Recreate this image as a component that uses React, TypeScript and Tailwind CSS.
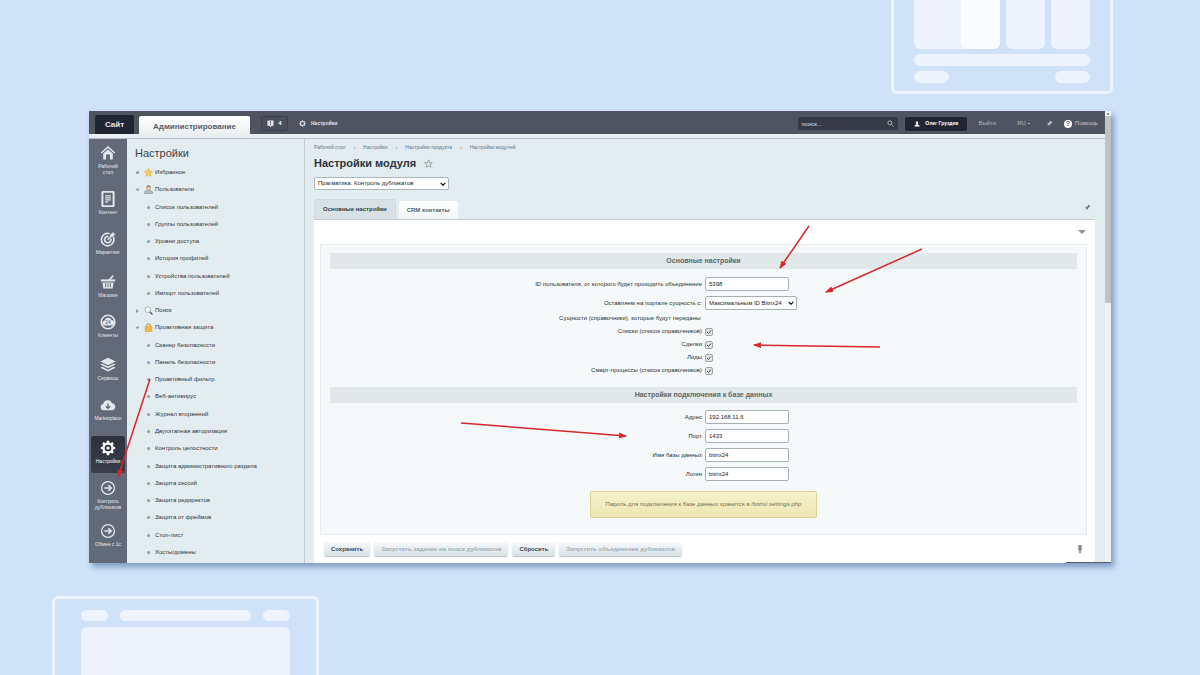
import type { ReactNode } from 'react'

const railItems = [
  { icon: 'home', lines: ['Рабочий', 'стол'], height: 'h-[46px]' },
  { icon: 'doc', lines: ['Контент'], height: 'h-[40px]' },
  { icon: 'target', lines: ['Маркетинг'], height: 'h-[43px]' },
  { icon: 'basket', lines: ['Магазин'], height: 'h-[40px]' },
  { icon: 'clients', lines: ['Клиенты'], height: 'h-[43px]' },
  { icon: 'layers', lines: ['Сервисы'], height: 'h-[40px]' },
  { icon: 'cloud', lines: ['Marketplace'], height: 'h-[43px]' },
  { icon: 'gear', lines: ['Настройки'], height: 'h-[40px]', active: true },
  { icon: 'arrow', lines: ['Контроль', 'дубликатов'], height: 'h-[43px]' },
  { icon: 'arrow', lines: ['Обмен с 1с'], height: 'h-[40px]' },
]

const menu = [
  { label: 'Избранное', icon: 'star', mark: 'dot' },
  { label: 'Пользователи', icon: 'user', mark: 'open' },
  { label: 'Список пользователей' },
  { label: 'Группы пользователей' },
  { label: 'Уровни доступа' },
  { label: 'История профилей' },
  { label: 'Устройства пользователей' },
  { label: 'Импорт пользователей' },
  { label: 'Поиск', icon: 'search', mark: 'closed' },
  { label: 'Проактивная защита', icon: 'lock', mark: 'open' },
  { label: 'Сканер безопасности' },
  { label: 'Панель безопасности' },
  { label: 'Проактивный фильтр' },
  { label: 'Веб-антивирус' },
  { label: 'Журнал вторжений' },
  { label: 'Двухэтапная авторизация' },
  { label: 'Контроль целостности' },
  { label: 'Защита административного раздела' },
  { label: 'Защита сессий' },
  { label: 'Защита редиректов' },
  { label: 'Защита от фреймов' },
  { label: 'Стоп-лист' },
  { label: 'Хосты/домены' },
]

const crumbs = ['Рабочий стол', 'Настройки', 'Настройки продукта', 'Настройки модулей']

const entities = [
  { id: 'lists', label: 'Списки (список справочников)' },
  { id: 'deals', label: 'Сделки' },
  { id: 'leads', label: 'Лиды' },
  { id: 'smart', label: 'Смарт-процессы (список справочников)' },
]

const dbFields = [
  { id: 'host', label: 'Адрес', value: '192.168.11.6' },
  { id: 'port', label: 'Порт', value: '1433' },
  { id: 'dbname', label: 'Имя базы данных', value: 'bitrix24' },
  { id: 'login', label: 'Логин', value: 'bitrix24' },
]

const gearPath =
  'M8.6 1h2.8l.4 2.3 1.6.7 1.9-1.4 2 2-1.3 1.9.6 1.6 2.4.5v2.8l-2.4.4-.6 1.6 1.3 2-2 1.9-1.9-1.3-1.6.6-.4 2.4H8.6l-.4-2.4-1.6-.6-1.9 1.3-2-1.9 1.3-2-.6-1.6L1 11.4V8.6l2.4-.5.6-1.6-1.3-1.9 2-2 1.9 1.4 1.6-.7z'

function RailIcon({ name }: { name: string }) {
  return (
    <svg viewBox="0 0 20 20" className="h-4 w-4 shrink-0" fill="none" stroke="#e3e7ec" strokeWidth="2">
      {name === 'home' && (
        <>
          <path d="M1.5 10 10 2.5 18.5 10" />
          <path d="M4 10.5V18h3.5v-6h5v6H16v-7.5L10 5.5z" fill="#e3e7ec" stroke="none" />
        </>
      )}
      {name === 'doc' && (
        <>
          <rect x="3" y="1" width="14" height="18" rx="1" strokeWidth="2.5" />
          <path d="M6.5 6h7M6.5 8.500h7M6.5 11h7M6.5 13.500h4" strokeWidth="1.5" />
        </>
      )}
      {name === 'target' && (
        <>
          <path d="M16.7 7.5A7.8 7.8 0 1 1 12 3.3" />
          <path d="M13.500 9.500a4 4 0 1 1-3-2.700" />
          <path d="m9.500 11 5-5" />
          <path d="m13 4.500 4-3.500v2.500h2.500L16 7.500h-3z" fill="#e3e7ec" stroke="none" />
        </>
      )}
      {name === 'basket' && (
        <>
          <path d="M1 8h18" strokeWidth="2.5" />
          <path d="M3 10.500h14l-1.200 7.500H4.200z" fill="#e3e7ec" stroke="none" />
          <path d="M7 11.500v5M10 11.500v5M13 11.500v5" stroke="#5d6473" strokeWidth="1.2" />
          <path d="m11.500 7.500 5-5.500" />
        </>
      )}
      {name === 'clients' && (
        <>
          <circle cx="10" cy="10" r="8.500" />
          <path d="M6 14.500a3.300 3.300 0 0 1-.5-6.500 4.800 4.800 0 0 1 9-.500 3.500 3.500 0 0 1-.500 7z" fill="#e3e7ec" stroke="none" />
          <text x="10" y="13" textAnchor="middle" fontSize="6" fill="#4c5362" stroke="none">24</text>
        </>
      )}
      {name === 'layers' && (
        <g fill="#e3e7ec" stroke="none">
          <path d="m10 1 9.500 4.700L10 10.400.5 5.700z" />
          <path d="m.5 9.500 2.500-1.200 7 3.500 7-3.500 2.500 1.200L10 14.200z" />
          <path d="m.5 13.500 2.500-1.200 7 3.500 7-3.500 2.500 1.200L10 18.200z" />
        </g>
      )}
      {name === 'cloud' && (
        <>
          <path d="M4.500 16.500a4 4 0 0 1-.5-7.900 5.800 5.800 0 0 1 11-.8 4.400 4.400 0 0 1 .5 8.700z" fill="#e3e7ec" stroke="none" />
          <path d="M10 8v6M7.300 11.500 10 14.200l2.700-2.700" stroke="#5d6473" strokeWidth="1.6" />
        </>
      )}
      {name === 'gear' && (
        <>
          <path d={gearPath} fill="#fff" stroke="none" />
          <circle cx="10" cy="10" r="4.200" fill="#2e333f" stroke="none" />
          <circle cx="10" cy="10" r="2" fill="#fff" stroke="none" />
        </>
      )}
      {name === 'arrow' && (
        <>
          <circle cx="10" cy="10" r="8" strokeWidth="1.6" />
          <path d="M5.500 10h8M10.500 6.500 14 10l-3.500 3.500" />
        </>
      )}
    </svg>
  )
}

function MenuIcon({ name }: { name: string }) {
  return (
    <svg viewBox="0 0 16 16" className="h-[9px] w-[9px] shrink-0">
      {name === 'star' && (
        <path d="m8 1 2.200 4.600 5 .6-3.700 3.500 1 5L8 12.300l-4.500 2.400 1-5L.8 6.200l5-.6z" fill="#f6cf55" stroke="#d9a93a" />
      )}
      {name === 'user' && (
        <>
          <path d="M1 15v-3l4-2h6l4 2v3z" fill="#b9c3cb" stroke="#6f7982" />
          <ellipse cx="8" cy="5" rx="3.500" ry="4.300" fill="#ecd0b0" stroke="#a78d75" />
          <path d="M4.500 4.500a3.500 3.800 0 0 1 7 0L8 3z" fill="#917760" />
        </>
      )}
      {name === 'search' && (
        <>
          <circle cx="6.500" cy="6.500" r="5" fill="#f7fbff" stroke="#9aa6b1" strokeWidth="1.5" />
          <path d="m10.500 10.500 4.500 4.500" stroke="#5d5c68" strokeWidth="2.5" />
        </>
      )}
      {name === 'lock' && (
        <>
          <path d="M4.500 8V5a3.500 3.500 0 0 1 7 0v3" fill="none" stroke="#c2a55c" strokeWidth="2" />
          <rect x="2" y="6" width="12" height="9.500" rx="1.500" fill="#f1bd4a" stroke="#cf9530" />
        </>
      )}
    </svg>
  )
}

function Mark({ kind }: { kind?: string }) {
  if (kind === 'open') return <svg viewBox="0 0 6 6" className="h-1 w-[5px] shrink-0"><path d="M0 1h6L3 5z" fill="#84929d" /></svg>
  if (kind === 'closed') return <svg viewBox="0 0 6 6" className="h-1 w-[5px] shrink-0"><path d="M1 0v6l4-3z" fill="#84929d" /></svg>
  return <span className="mx-px h-[3px] w-[3px] shrink-0 rounded-full bg-[#8e9dab]" />
}

function Pin({ className }: { className: string }) {
  return (
    <svg viewBox="0 0 16 16" className={className} fill="currentColor">
      <path d="m10 1 5 5-1.500 1-1-.3-3 3L9 12l-1 1-2.300-2.300L1 15l4-5L3 8l1-1 2.500-.5 3-3L9 2z" />
    </svg>
  )
}

function Chevron() {
  return (
    <svg viewBox="0 0 10 6" className="pointer-events-none absolute right-[3px] h-1 w-[6px]" fill="none" stroke="#111" strokeWidth="2">
      <path d="m1 1 4 4 4-4" />
    </svg>
  )
}

function Header() {
  return (
    <header className="flex h-[23px] items-center bg-[#4f5461] pl-[6px] pr-[7px] pt-[2px] text-white">
      <nav className="flex h-full items-end gap-[5px]">
        <a href="#site" className="flex h-[19px] w-[39px] items-center justify-center rounded-t-xs bg-[#202534] text-[8px] font-bold text-[#e4e7eb]">Сайт</a>
        <a href="#admin" className="relative z-10 -mb-[4px] flex h-[22px] w-[111px] items-center justify-center rounded-t-xs bg-linear-to-b from-white to-[#e6edee] text-[8px] font-bold text-[#586066]">
          Администрирование
        </a>
      </nav>
      <button className="ml-[11px] flex h-[15px] w-[27px] items-center justify-center gap-1 rounded-xs border border-[#3b404c] bg-[#4a4f5c] text-[6px] font-bold">
        <svg viewBox="0 0 16 16" className="h-[7px] w-[7px]">
          <path d="M1 1h14v12h-4l-3 3-3-3H1z" fill="#e4e7ea" />
          <path d="M8 3v5M8 9.500v2" stroke="#4a4f5c" strokeWidth="2" />
        </svg>
        4
      </button>
      <a href="#settings" className="ml-[11px] flex items-center gap-[5px] text-[5px] font-bold text-[#e4e7eb]">
        <svg viewBox="0 0 20 20" className="h-[7px] w-[7px]">
          <path d={gearPath} fill="#e4e7eb" />
          <circle cx="10" cy="10" r="4" fill="#4f5461" />
        </svg>
        Настройки
      </a>
      <div className="relative ml-auto flex h-[13px] w-[100px] items-center">
        <input aria-label="поиск" placeholder="поиск..." className="h-full w-full rounded-xs bg-[#353a46] px-[3px] text-[6px] text-white placeholder:text-[#d9dce1]" />
        <svg viewBox="0 0 12 12" className="absolute right-1 h-[7px] w-[7px]" fill="none" stroke="#b9bec7" strokeWidth="1.5">
          <circle cx="5" cy="5" r="3.500" />
          <path d="m8 8 3 3" />
        </svg>
      </div>
      <a href="#profile" className="ml-[7px] flex h-[14px] w-[62px] items-center justify-center gap-[5px] rounded-xs bg-[#202534] text-[5px] font-bold">
        <svg viewBox="0 0 12 12" className="h-[6px] w-[6px]" fill="#fff">
          <path d="M3.500 3.500a2.500 3 0 1 1 5 0c0 1.500-.7 2-1 3.500L11 9v2H1V9l3.500-2c-.3-1.500-1-2-1-3.500z" />
        </svg>
        Олег Груздев
      </a>
      <a href="#logout" className="ml-[11px] text-[6px] text-[#b3b8c1]">Выйти</a>
      <button className="ml-[21px] flex items-center gap-[2px] text-[6px] text-[#b3b8c1]">
        RU
        <span className="h-px w-[2px] bg-[#b3b8c1]" />
      </button>
      <button aria-label="Закрепить" className="ml-4 text-[#b8c0cb]"><Pin className="h-[7px] w-[7px]" /></button>
      <a href="#help" className="ml-[11px] flex items-center gap-[3px] text-[6px] text-[#c3c8d0]">
        <span className="flex h-2 w-2 items-center justify-center rounded-full bg-white text-[7px] font-bold leading-none text-[#4f5461]">?</span>
        Помощь
      </a>
    </header>
  )
}

function Rail() {
  return (
    <nav className="w-[38px] shrink-0 bg-[#626978] px-[2px] pt-[2px] text-center">
      {railItems.map((item) => (
        <div key={item.lines[0]} className={item.height}>
          <a
            href="#section"
            className={
              item.active
                ? 'flex h-[37px] flex-col items-center rounded-xs bg-linear-to-b from-[#2c313d] to-[#383e4b] pt-1 text-[5px] leading-[6px] text-white'
                : 'flex h-[37px] flex-col items-center pt-1 text-[5px] leading-[6px] text-[#e5e8ed]'
            }
          >
            <RailIcon name={item.icon} />
            <span className="mt-[2px] flex flex-col items-center whitespace-nowrap">
              {item.lines.map((line) => <span key={line}>{line}</span>)}
            </span>
          </a>
        </div>
      ))}
    </nav>
  )
}

function Sidebar() {
  return (
    <aside className="flex w-[178px] shrink-0 flex-col border-r border-[#c3ced4] bg-[#e3ecee] pb-[2px] pt-[7px]">
      <h2 className="pl-2 text-[11px] leading-[14px] text-[#3c454b]">Настройки</h2>
      <ul className="mt-1 flex flex-1 flex-col justify-between">
        {menu.map((item) => (
          <li key={item.label} className={item.icon ? 'flex h-[17px] items-center pl-2' : 'flex h-[17px] items-center pl-[19px]'}>
            <a href="#menu" className="flex items-center text-[6px] text-[#30363a]">
              <Mark kind={item.mark} />
              {item.icon && <span className="ml-1 mr-[2px]"><MenuIcon name={item.icon} /></span>}
              <span className={item.icon ? '' : 'ml-1'}>{item.label}</span>
            </a>
          </li>
        ))}
      </ul>
    </aside>
  )
}

function Section({ title, children }: { title: string; children: ReactNode }) {
  return (
    <section>
      <h3 className="bg-[#e0e8ea] text-center text-[7px] font-bold leading-4 text-[#5a666d]">{title}</h3>
      {children}
    </section>
  )
}

function TextRow({ id, label, value }: { id: string; label: string; value: string }) {
  return (
    <div className="grid grid-cols-2 items-center gap-x-[3px]">
      <label htmlFor={id} className="text-right">{label}</label>
      <input id={id} defaultValue={value} className="h-[14px] w-[84px] rounded-xs border border-[#a5afb6] bg-white px-[3px] text-[6px] text-[#222]" />
    </div>
  )
}

function SettingsForm() {
  return (
    <form className="border border-[#e6ecef] bg-[#f5f9f9] px-[9px] pb-4 pt-2 text-[6px] leading-[13px] text-[#2b3135]">
      <Section title="Основные настройки">
        <div className="flex flex-col gap-[5px] pt-2">
          <TextRow id="user" label="ID пользователя, от которого будет проходить объединение" value="5398" />
          <div className="grid grid-cols-2 items-center gap-x-[3px]">
            <label htmlFor="keep" className="text-right">Оставляем на портале сущность с:</label>
            <div className="relative flex w-[92px] items-center">
              <select id="keep" className="h-[14px] w-full appearance-none rounded-xs border border-[#a5afb6] bg-white px-[3px] text-[6px] leading-3 text-[#222]">
                <option>Максимальным ID Bitrix24</option>
              </select>
              <Chevron />
            </div>
          </div>
        </div>
        <fieldset aria-label="Сущности" className="pb-[10px] pt-[2px]">
          <div className="grid grid-cols-2 gap-x-[3px]">
            <span className="text-right">Сущности (справочники), которые будут переданы:</span>
          </div>
          {entities.map((item) => (
            <div key={item.id} className="grid grid-cols-2 items-center gap-x-[3px]">
              <label htmlFor={item.id} className="text-right">{item.label}</label>
              <span className="grid h-2 w-2">
                <input id={item.id} type="checkbox" defaultChecked className="col-start-1 row-start-1 h-2 w-2 appearance-none rounded-xs border border-[#9ba5ab] bg-[#e3e9eb]" />
                <svg viewBox="0 0 8 8" className="pointer-events-none col-start-1 row-start-1 h-2 w-2" fill="none" stroke="#434a50" strokeWidth="1">
                  <path d="m2 4 1.500 1.500L6 2.500" />
                </svg>
              </span>
            </div>
          ))}
        </fieldset>
      </Section>
      <Section title="Настройки подключения к базе данных">
        <div className="flex flex-col gap-[5px] pt-[7px]">
          {dbFields.map((field) => (
            <TextRow key={field.id} {...field} />
          ))}
        </div>
        <p className="mx-auto mt-[10px] w-fit rounded-xs border border-[#ddd296] bg-linear-to-b from-[#f6f2cb] to-[#eee6b2] px-[15px] py-[6px] text-[#766f52]">
          Пароль для подключения к базе данных хранится в /bitrix/.settings.php
        </p>
      </Section>
    </form>
  )
}

function ActionButton({ children, disabled = false }: { children: ReactNode; disabled?: boolean }) {
  return (
    <button
      disabled={disabled}
      className="h-[14px] rounded-xs bg-linear-to-b from-[#f8fafb] to-[#d8e1e6] px-[7px] text-[6px] font-bold text-[#3c474e] shadow-[0_1px_1px_#b9c4ca] disabled:text-[#a3adb3]"
    >
      {children}
    </button>
  )
}

function Content() {
  return (
    <main className="min-w-0 flex-1 bg-[#e3ecee] pl-[9px] pr-[10px] pt-1">
      <nav className="flex gap-2 text-[5px] leading-[9px] text-[#62758e]">
        {crumbs.map((crumb, i) => (
          <span key={crumb} className="flex gap-2">
            {i > 0 && <span>›</span>}
            <a href="#crumb">{crumb}</a>
          </span>
        ))}
      </nav>
      <h1 className="mt-[4px] flex items-center gap-2 text-[11px] font-bold leading-[14px] text-[#2d3439]">
        Настройки модуля
        <svg viewBox="0 0 16 16" className="h-[9px] w-[9px]" fill="none" stroke="#8b969e" strokeWidth="1.5">
          <path d="m8 1.500 2 4.500 4.800.5-3.600 3.200 1 4.800L8 12l-4.200 2.500 1-4.800L1.200 6.500 6 6z" />
        </svg>
      </h1>
      <div className="relative mt-[7px] flex w-[135px] items-center">
        <select aria-label="Модуль" className="h-[13px] w-full appearance-none rounded-xs border border-[#abb5bb] bg-white px-[3px] text-[6px] leading-[11px] text-[#222]">
          <option>Прагматика. Контроль дубликатов</option>
        </select>
        <Chevron />
      </div>
      <div className="mt-[9px] flex items-end gap-[3px] border-b border-[#c2cdd3] text-[6px] font-bold">
        <button className="h-[20px] rounded-t-xs border border-b-0 border-[#d0dadf] bg-[#d8e2e5] px-2 text-[#343b40]">Основные настройки</button>
        <button className="h-[18px] rounded-t-xs bg-linear-to-b from-white to-[#f1f5f6] px-2 text-[#566068]">CRM контакты</button>
        <button aria-label="Закрепить вкладки" className="mb-2 ml-auto mr-1 text-[#77828a]"><Pin className="h-[7px] w-[7px]" /></button>
      </div>
      <div className="bg-white pb-[7px] pl-[6px] pr-2">
        <div className="flex h-6 items-center justify-end pr-px">
          <button aria-label="Свернуть">
            <svg viewBox="0 0 8 4" className="h-1 w-2"><path d="M0 0h8L4 4z" fill="#88949c" /></svg>
          </button>
        </div>
        <SettingsForm />
        <div className="mt-[7px] flex items-center gap-1 px-1">
          <ActionButton>Сохранить</ActionButton>
          <ActionButton disabled>Запустить задание на поиск дубликатов</ActionButton>
          <ActionButton>Сбросить</ActionButton>
          <ActionButton disabled>Запустить объединение дубликатов</ActionButton>
          <svg viewBox="0 0 8 12" className="ml-auto h-[9px] w-[6px]" fill="#77828a">
            <path d="M2 0h4v5l1 2H5v4H3V7H1l1-2z" />
          </svg>
        </div>
      </div>
    </main>
  )
}

function Arrows() {
  return (
    <svg viewBox="0 0 1022 452" className="pointer-events-none absolute left-0 top-0 z-20 w-full" stroke="#d8262c" strokeWidth="1.5">
      <defs>
        <marker id="head" viewBox="0 0 8 6" refX="7" refY="3" markerWidth="8" markerHeight="6" markerUnits="userSpaceOnUse" orient="auto">
          <path d="M0 0 8 3 0 6z" fill="#d8262c" stroke="none" />
        </marker>
      </defs>
      <path d="M720 115 691 157" markerEnd="url(#head)" />
      <path d="M833 138 737 181" markerEnd="url(#head)" />
      <path d="M791 236 665 234" markerEnd="url(#head)" />
      <path d="M372 312 537 325" markerEnd="url(#head)" />
      <path d="M61 268 29 366" markerEnd="url(#head)" />
    </svg>
  )
}

function Backdrop() {
  return (
    <>
      <div className="absolute right-[87px] top-0 w-[222px] rounded-b-md border-[3px] border-t-0 border-[#edf4fd] px-5 pb-2">
        <div className="flex h-[49px] gap-[6px]">
          <div className="flex flex-[85] overflow-hidden rounded-b-md bg-[#edf4fd]">
            <div className="ml-auto w-[39px] rounded-b-md bg-[#fafcff]" />
          </div>
          <div className="flex-[39] rounded-b-md bg-[#edf4fd]" />
          <div className="flex-[39] rounded-b-md bg-[#edf4fd]" />
        </div>
        <div className="mt-[5px] h-3 rounded-full bg-[#edf4fd]" />
        <div className="mt-[5px] flex justify-between">
          <div className="h-3 w-[35px] rounded-full bg-[#edf4fd]" />
          <div className="h-3 w-[35px] rounded-full bg-[#edf4fd]" />
        </div>
      </div>
      <div className="absolute bottom-0 left-[52px] w-[267px] rounded-t-md border-[3px] border-b-0 border-[#edf4fd] px-[26px] pt-[11px]">
        <div className="flex gap-3">
          <div className="h-[11px] w-[27px] rounded-full bg-[#edf4fd]" />
          <div className="h-[11px] flex-1 rounded-full bg-[#edf4fd]" />
          <div className="h-[11px] w-[27px] rounded-full bg-[#edf4fd]" />
        </div>
        <div className="mt-[6px] h-12 rounded-t-md bg-[#edf4fd]" />
      </div>
    </>
  )
}

export default function App() {
  return (
    <div className="relative min-h-screen overflow-hidden bg-[#cfe2f8] px-[89px] py-[111px] font-['Liberation_Sans',Arial,sans-serif]">
      <Backdrop />
      <div className="relative flex shadow-[3px_4px_6px_#7f9bc0]">
        <div className="min-w-0 flex-1">
          <Header />
          <div className="h-[5px] border-b border-[#b4bfc9] bg-[#e9eff2]" />
          <div className="flex">
            <Rail />
            <Sidebar />
            <Content />
          </div>
        </div>
        <div className="w-[6px] bg-[#f0f2f3]">
          <div className="flex h-[5px] items-center justify-center">
            <span className="h-[2px] w-[2px] bg-[#8d9296]" />
          </div>
          <div className="h-[187px] bg-[#bfc1c3]" />
        </div>
        <div className="absolute bottom-0 right-0 h-px w-[45px] bg-[#555b63]" />
        <Arrows />
      </div>
    </div>
  )
}
